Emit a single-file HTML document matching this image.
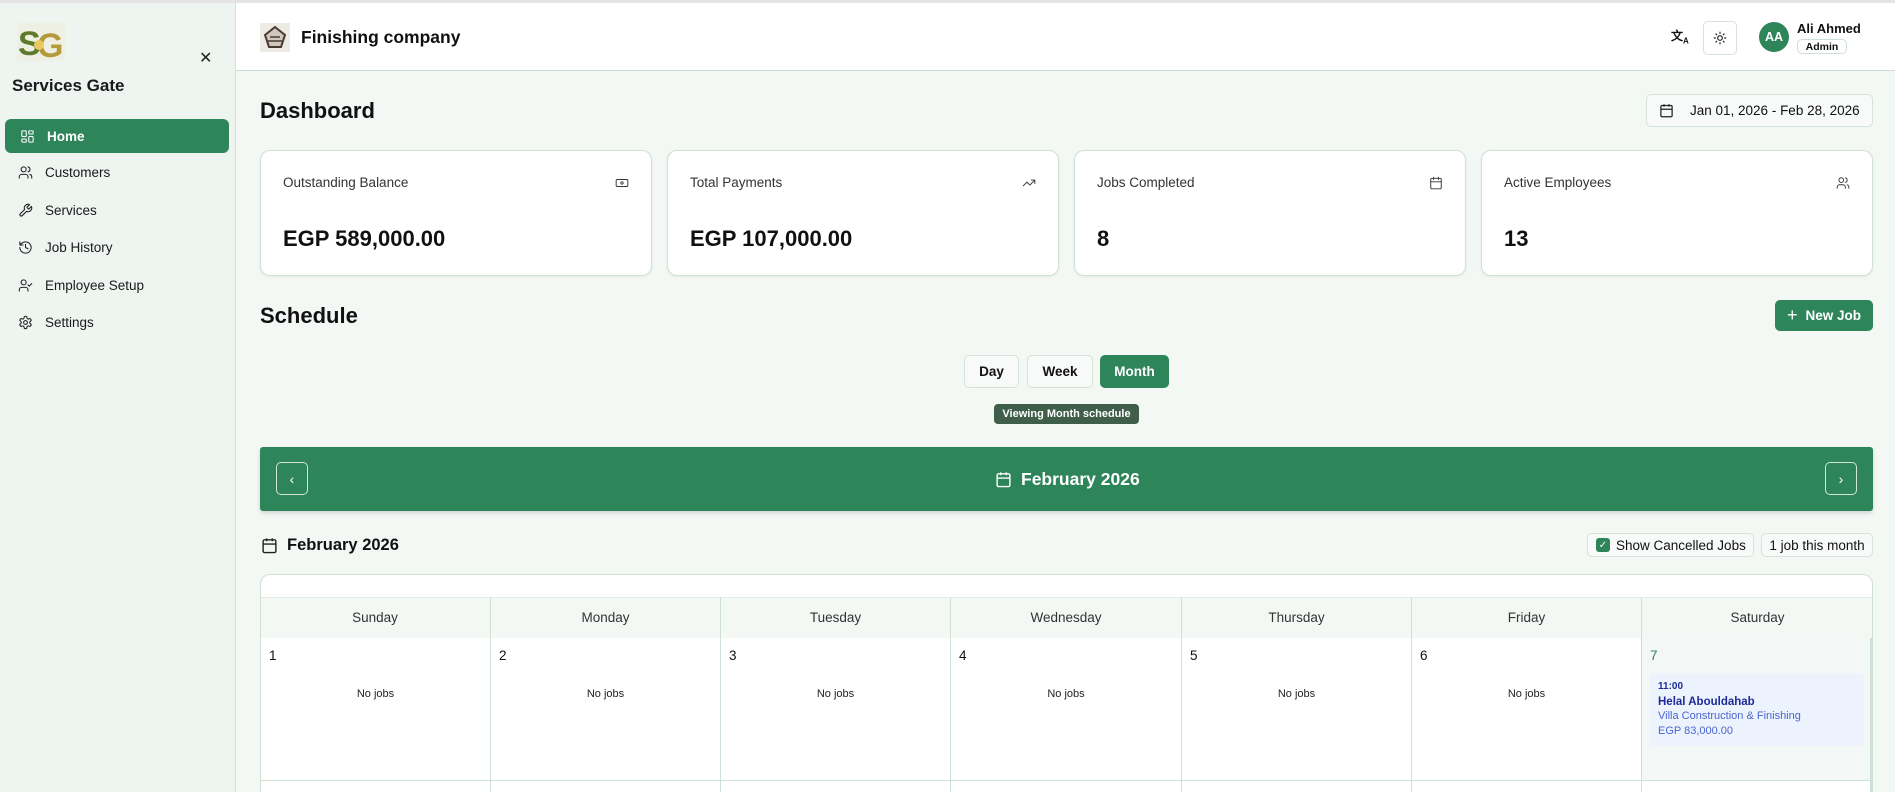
<!DOCTYPE html>
<html style="height:792px;overflow:hidden"><head><meta charset="utf-8"><style>
*{box-sizing:border-box;margin:0;padding:0}
body{width:1895px;height:792px;overflow:hidden;font-family:"Liberation Sans",sans-serif;background:#f4f8f5;color:#111;position:relative}
.abs{position:absolute}
.topline{left:0;top:0;width:1895px;height:3px;background:#e4e4e4}
.side{left:0;top:3px;width:236px;height:789px;background:#eef4f0;border-right:1px solid #cfe0d5}
.nav{position:absolute;left:5px;width:224px;height:34px;display:flex;align-items:center;padding-left:13px;font-size:13.5px;color:#1a1a1a}
.nav svg{width:15px;height:15px;margin-right:12px;fill:none;stroke:#222;stroke-width:1.7;stroke-linecap:round;stroke-linejoin:round}
.nav.on{background:#2e855a;color:#fff;border-radius:6px;font-weight:bold;padding-left:15px}
.nav.on svg{stroke:#fff}
.header{left:236px;top:3px;width:1659px;height:68px;background:#fff;border-bottom:1px solid #c9dccf}
.card{position:absolute;top:150px;width:392px;height:126px;background:#fff;border:1px solid #cfe0d5;border-radius:10px;box-shadow:0 1px 3px rgba(0,0,0,.06)}
.card .t{position:absolute;left:22px;top:24px;font-size:13.5px;color:#333}
.card .v{position:absolute;left:22px;top:75px;font-size:22px;font-weight:bold;color:#111}
.card svg{position:absolute;right:22px;top:25px;width:14px;height:14px;fill:none;stroke:#333;stroke-width:1.6;stroke-linecap:round;stroke-linejoin:round}
.btn{position:absolute;border:1px solid #d5e3d9;border-radius:5px;background:#f7faf8;display:flex;align-items:center;justify-content:center;font-size:13.5px}
.col{position:absolute;top:597px;height:41px;display:flex;align-items:center;justify-content:center;font-size:13.5px;color:#333;border-right:1px solid #cfe0d5}
.cell{position:absolute;top:638px;height:142px;border-right:1px solid #cfe0d5;background:#fff}
.cell .n{position:absolute;left:8px;top:10px;font-size:13.5px}
.cell .nj{position:absolute;left:0;right:0;top:50px;text-align:center;font-size:11px;color:#222}
</style></head><body>
<div class="abs topline"></div>
<div class="abs side">
  <svg class="abs" style="left:17px;top:20px" width="48" height="38" viewBox="0 0 48 38">
    <rect width="48" height="38" fill="#eef0e4"/>
    <text x="1" y="32" font-family="Liberation Sans" font-weight="bold" font-size="34" fill="#5f7a2a">S</text>
    <text x="20" y="34" font-family="Liberation Sans" font-weight="bold" font-size="34" fill="#b59a3a">G</text>
    <circle cx="22" cy="22" r="5" fill="#e8c860"/>
  </svg>
  <div class="abs" style="left:199px;top:45px;font-size:16px;color:#222">✕</div>
  <div class="abs" style="left:12px;top:73px;font-size:17px;font-weight:bold;color:#1a1a1a">Services Gate</div>
  <div class="nav on" style="top:116px"><svg viewBox="0 0 24 24"><rect x="3" y="3" width="7" height="9" rx="1"/><rect x="14" y="3" width="7" height="5" rx="1"/><rect x="14" y="12" width="7" height="9" rx="1"/><rect x="3" y="16" width="7" height="5" rx="1"/></svg>Home</div>
  <div class="nav" style="top:152px"><svg viewBox="0 0 24 24"><circle cx="9" cy="7" r="4"/><path d="M2 21v-2a4 4 0 0 1 4-4h6a4 4 0 0 1 4 4v2M16 3.1a4 4 0 0 1 0 7.8M22 21v-2a4 4 0 0 0-3-3.9"/></svg>Customers</div>
  <div class="nav" style="top:190px"><svg viewBox="0 0 24 24"><path d="M14.7 6.3a1 1 0 0 0 0 1.4l1.6 1.6a1 1 0 0 0 1.4 0l3.8-3.8a6 6 0 0 1-7.9 7.9l-6.9 6.9a2.1 2.1 0 0 1-3-3l6.9-6.9a6 6 0 0 1 7.9-7.9z"/></svg>Services</div>
  <div class="nav" style="top:227px"><svg viewBox="0 0 24 24"><path d="M3 12a9 9 0 1 0 3-6.7L3 8M3 3v5h5M12 7v5l4 2"/></svg>Job History</div>
  <div class="nav" style="top:265px"><svg viewBox="0 0 24 24"><circle cx="9" cy="7" r="4"/><path d="M2 21v-2a4 4 0 0 1 4-4h6a4 4 0 0 1 4 4v2M16 11l2 2 4-4"/></svg>Employee Setup</div>
  <div class="nav" style="top:302px"><svg viewBox="0 0 24 24"><circle cx="12" cy="12" r="3"/><path d="M12.2 2h-.4a2 2 0 0 0-2 2v.2a2 2 0 0 1-1 1.7l-.4.3a2 2 0 0 1-2 0l-.2-.1a2 2 0 0 0-2.7.7l-.2.4a2 2 0 0 0 .7 2.7l.2.1a2 2 0 0 1 1 1.7v.5a2 2 0 0 1-1 1.7l-.2.1a2 2 0 0 0-.7 2.7l.2.4a2 2 0 0 0 2.7.7l.2-.1a2 2 0 0 1 2 0l.4.3a2 2 0 0 1 1 1.7v.2a2 2 0 0 0 2 2h.4a2 2 0 0 0 2-2v-.2a2 2 0 0 1 1-1.7l.4-.3a2 2 0 0 1 2 0l.2.1a2 2 0 0 0 2.7-.7l.2-.4a2 2 0 0 0-.7-2.7l-.2-.1a2 2 0 0 1-1-1.7v-.5a2 2 0 0 1 1-1.7l.2-.1a2 2 0 0 0 .7-2.7l-.2-.4a2 2 0 0 0-2.7-.7l-.2.1a2 2 0 0 1-2 0l-.4-.3a2 2 0 0 1-1-1.7V4a2 2 0 0 0-2-2z"/></svg>Settings</div>
</div>
<div class="abs header">
  <svg class="abs" style="left:24px;top:20px" width="30" height="29" viewBox="0 0 30 29"><rect width="30" height="29" fill="#eeeae4"/><path d="M5 12l10-8 10 8-4 12H9z" fill="#cfc7bd" stroke="#4a3a30" stroke-width="2"/><path d="M8 18h14M10 14h10" stroke="#4a3a30" stroke-width="1.5"/></svg>
  <div class="abs" style="left:65px;top:24px;font-size:17.5px;font-weight:bold;color:#111">Finishing company</div>
  <div class="abs" style="left:1435px;top:24px;font-size:12px;font-weight:bold">文<sub style="font-size:8px">A</sub></div>
  <div class="abs" style="left:1467px;top:18px;width:34px;height:34px;border:1px solid #d5e3d9;border-radius:5px;display:flex;align-items:center;justify-content:center"><svg width="14" height="14" viewBox="0 0 24 24" fill="none" stroke="#222" stroke-width="2" stroke-linecap="round"><circle cx="12" cy="12" r="4"/><path d="M12 2v2M12 20v2M4.9 4.9l1.4 1.4M17.7 17.7l1.4 1.4M2 12h2M20 12h2M6.3 17.7l-1.4 1.4M19.1 4.9l-1.4 1.4"/></svg></div>
  <div class="abs" style="left:1523px;top:19px;width:30px;height:30px;border-radius:50%;background:#2e855a;color:#fff;font-size:12.5px;font-weight:bold;display:flex;align-items:center;justify-content:center">AA</div>
  <div class="abs" style="left:1561px;top:18px;font-size:13px;font-weight:bold">Ali Ahmed</div>
  <div class="abs" style="left:1561px;top:36px;width:50px;height:15px;border:1px solid #cfe0d5;border-radius:5px;font-size:10.5px;font-weight:bold;display:flex;align-items:center;justify-content:center">Admin</div>
</div>
<div class="abs" style="left:260px;top:98px;font-size:22px;font-weight:bold">Dashboard</div>
<div class="btn" style="left:1646px;top:94px;width:227px;height:33px;justify-content:flex-start;padding-left:12px"><svg width="15" height="15" viewBox="0 0 24 24" fill="none" stroke="#222" stroke-width="2"><rect x="3" y="4" width="18" height="18" rx="2"/><path d="M16 2v4M8 2v4M3 10h18"/></svg><span style="margin-left:16px">Jan 01, 2026 - Feb 28, 2026</span></div>
<div class="card" style="left:260px"><div class="t">Outstanding Balance</div><svg viewBox="0 0 24 24"><rect x="2" y="6" width="20" height="12" rx="2"/><circle cx="12" cy="12" r="2"/></svg><div class="v">EGP 589,000.00</div></div>
<div class="card" style="left:667px"><div class="t">Total Payments</div><svg viewBox="0 0 24 24"><path d="M22 7l-8.5 8.5-5-5L2 17M16 7h6v6"/></svg><div class="v">EGP 107,000.00</div></div>
<div class="card" style="left:1074px"><div class="t">Jobs Completed</div><svg viewBox="0 0 24 24"><rect x="3" y="4" width="18" height="18" rx="2"/><path d="M16 2v4M8 2v4M3 10h18"/></svg><div class="v">8</div></div>
<div class="card" style="left:1481px"><div class="t">Active Employees</div><svg viewBox="0 0 24 24"><circle cx="9" cy="7" r="4"/><path d="M2 21v-2a4 4 0 0 1 4-4h6a4 4 0 0 1 4 4v2M16 3.1a4 4 0 0 1 0 7.8M22 21v-2a4 4 0 0 0-3-3.9"/></svg><div class="v">13</div></div>
<div class="abs" style="left:260px;top:303px;font-size:22px;font-weight:bold">Schedule</div>
<div class="abs" style="left:1775px;top:300px;width:98px;height:31px;background:#2e855a;border-radius:5px;color:#fff;font-size:13.5px;font-weight:bold;display:flex;align-items:center;justify-content:center"><span style="font-size:18px;font-weight:normal;margin-right:8px">+</span>New Job</div>
<div class="btn" style="left:964px;top:355px;width:55px;height:33px;font-weight:bold">Day</div>
<div class="btn" style="left:1027px;top:355px;width:66px;height:33px;font-weight:bold">Week</div>
<div class="btn" style="left:1100px;top:355px;width:69px;height:33px;background:#2e855a;border-color:#2e855a;color:#fff;font-weight:bold">Month</div>
<div class="abs" style="left:994px;top:404px;width:145px;height:20px;background:#3f5f4a;border-radius:4px;color:#fff;font-size:11px;font-weight:bold;display:flex;align-items:center;justify-content:center">Viewing Month schedule</div>
<div class="abs" style="left:260px;top:447px;width:1613px;height:64px;background:#2e855a;border-radius:3px;box-shadow:0 2px 4px rgba(0,0,0,.15)">
  <div class="abs" style="left:16px;top:15px;width:32px;height:33px;border:1px solid #cfe6d8;border-radius:5px;color:#fff;display:flex;align-items:center;justify-content:center;font-size:14px">‹</div>
  <div class="abs" style="right:16px;top:15px;width:32px;height:33px;border:1px solid #cfe6d8;border-radius:5px;color:#fff;display:flex;align-items:center;justify-content:center;font-size:14px">›</div>
  <div class="abs" style="left:735px;top:22px;display:flex;align-items:center;color:#fff;font-size:17.5px;font-weight:bold"><svg width="17" height="17" viewBox="0 0 24 24" fill="none" stroke="#fff" stroke-width="2"><rect x="3" y="4" width="18" height="18" rx="2"/><path d="M16 2v4M8 2v4M3 10h18"/></svg><span style="margin-left:9px">February 2026</span></div>
</div>
<div class="abs" style="left:261px;top:536px;display:flex;align-items:center;font-size:16.5px;font-weight:bold"><svg width="17" height="17" viewBox="0 0 24 24" fill="none" stroke="#222" stroke-width="2"><rect x="3" y="4" width="18" height="18" rx="2"/><path d="M16 2v4M8 2v4M3 10h18"/></svg><span style="margin-left:9px">February 2026</span></div>
<div class="btn" style="left:1587px;top:533px;width:167px;height:24px;font-size:13.5px;justify-content:flex-start;padding-left:8px"><span style="width:14px;height:14px;background:#2e855a;border-radius:3px;color:#fff;font-size:10px;display:inline-flex;align-items:center;justify-content:center;margin-right:6px">✓</span>Show Cancelled Jobs</div>
<div class="btn" style="left:1761px;top:533px;width:112px;height:24px;font-size:13.5px">1 job this month</div>
<div class="abs" style="left:260px;top:574px;width:1613px;height:240px;background:#fff;border:1px solid #cfe0d5;border-radius:10px;overflow:hidden">
  <div class="abs" style="left:0;top:22px;width:1613px;height:42px;background:#f4f8f5;border-top:1px solid #e4ece6;border-bottom:1px solid #cfe0d5"></div>
</div>
<div class="col" style="left:260px;width:231px">Sunday</div>
<div class="col" style="left:491px;width:230px">Monday</div>
<div class="col" style="left:721px;width:230px">Tuesday</div>
<div class="col" style="left:951px;width:231px">Wednesday</div>
<div class="col" style="left:1182px;width:230px">Thursday</div>
<div class="col" style="left:1412px;width:230px">Friday</div>
<div class="col" style="left:1642px;width:231px;border-right:none">Saturday</div>
<div class="cell" style="left:261px;width:230px"><div class="n">1</div><div class="nj">No jobs</div></div>
<div class="cell" style="left:491px;width:230px"><div class="n">2</div><div class="nj">No jobs</div></div>
<div class="cell" style="left:721px;width:230px"><div class="n">3</div><div class="nj">No jobs</div></div>
<div class="cell" style="left:951px;width:231px"><div class="n">4</div><div class="nj">No jobs</div></div>
<div class="cell" style="left:1182px;width:230px"><div class="n">5</div><div class="nj">No jobs</div></div>
<div class="cell" style="left:1412px;width:230px"><div class="n">6</div><div class="nj">No jobs</div></div>
<div class="cell" style="left:1642px;width:230px;background:#f3f7f5;border-right:2px solid #cfe0d5"><div class="n" style="color:#2e855a">7</div>
  <div class="abs" style="left:8px;top:35px;width:214px;height:73px;background:#edf3fd;border-radius:5px;padding:7px 8px;font-size:11px;line-height:14.5px">
    <div style="color:#1e2a9a;font-weight:bold;font-size:10px">11:00</div>
    <div style="color:#1e2a9a;font-weight:bold;font-size:11.5px">Helal Abouldahab</div>
    <div style="color:#4a66d0">Villa Construction &amp; Finishing</div>
    <div style="color:#4a66d0">EGP 83,000.00</div>
  </div>
</div>
<div class="abs" style="left:261px;top:780px;width:1612px;height:1px;background:#cfe0d5"></div>
<div class="cell" style="top:781px;left:261px;width:230px;height:20px"></div>
<div class="cell" style="top:781px;left:491px;width:230px;height:20px"></div>
<div class="cell" style="top:781px;left:721px;width:230px;height:20px"></div>
<div class="cell" style="top:781px;left:951px;width:231px;height:20px"></div>
<div class="cell" style="top:781px;left:1182px;width:230px;height:20px"></div>
<div class="cell" style="top:781px;left:1412px;width:230px;height:20px"></div>
<div class="cell" style="top:781px;left:1642px;width:230px;height:20px;border-right:2px solid #cfe0d5"></div>
</body></html>
